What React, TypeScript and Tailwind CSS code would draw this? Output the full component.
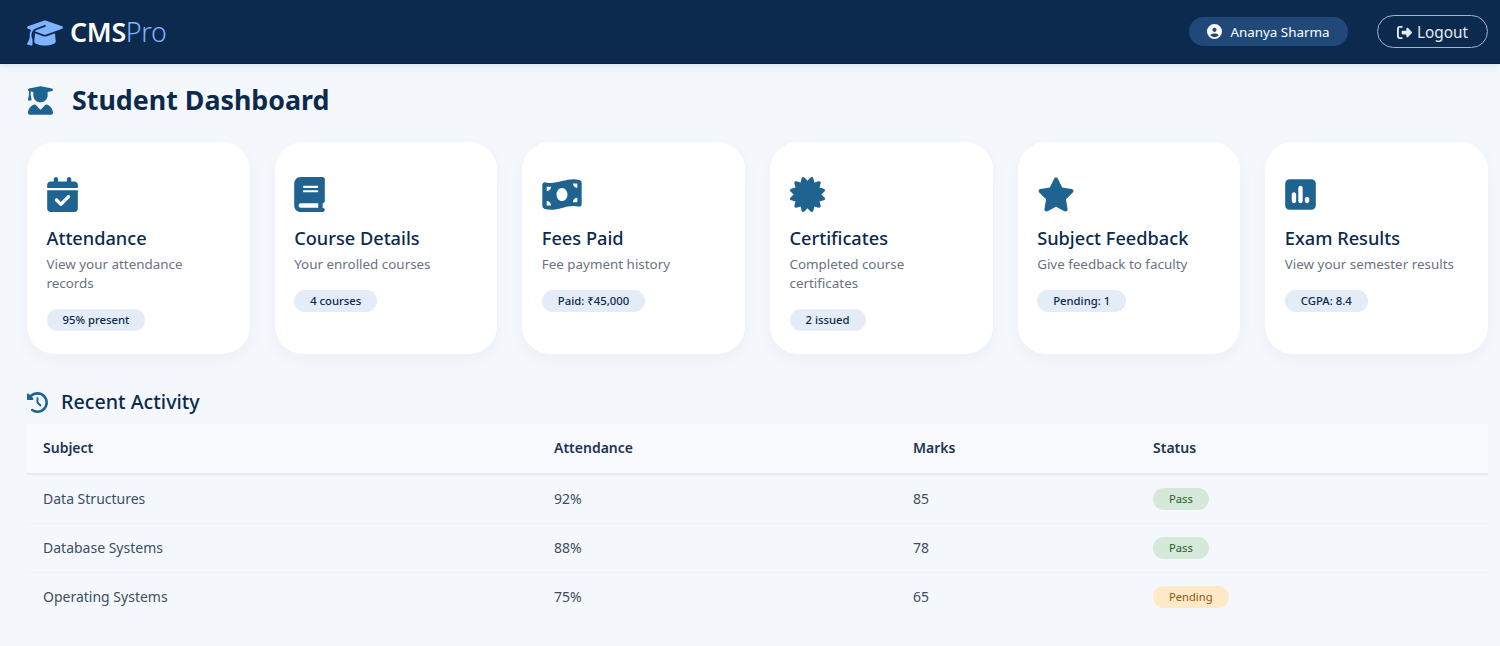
import type { IconType } from "react-icons"
import {
    FaBook,
    FaCalendarCheck,
    FaCertificate,
    FaCircleUser,
    FaClockRotateLeft,
    FaGraduationCap,
    FaMoneyBillWave,
    FaRightFromBracket,
    FaSquarePollVertical,
    FaStar,
    FaUserGraduate,
} from "react-icons/fa6"

interface ICard {
    icon: IconType,
    iconWidth: string,
    title: string,
    desc: string,
    badge: string,
}

const cards: ICard[] = [
    { icon: FaCalendarCheck, iconWidth: "w-[31px]", title: "Attendance", desc: "View your attendance records", badge: "95% present" },
    { icon: FaBook, iconWidth: "w-[31px]", title: "Course Details", desc: "Your enrolled courses", badge: "4 courses" },
    { icon: FaMoneyBillWave, iconWidth: "w-[40px]", title: "Fees Paid", desc: "Fee payment history", badge: "Paid: ₹45,000" },
    { icon: FaCertificate, iconWidth: "w-[35px]", title: "Certificates", desc: "Completed course certificates", badge: "2 issued" },
    { icon: FaStar, iconWidth: "w-[38px]", title: "Subject Feedback", desc: "Give feedback to faculty", badge: "Pending: 1" },
    { icon: FaSquarePollVertical, iconWidth: "w-[31px]", title: "Exam Results", desc: "View your semester results", badge: "CGPA: 8.4" },
]

const rows = [
    { subject: "Data Structures", attendance: "92%", marks: "85", status: "Pass" },
    { subject: "Database Systems", attendance: "88%", marks: "78", status: "Pass" },
    { subject: "Operating Systems", attendance: "75%", marks: "65", status: "Pending" },
]

function Header() {
    return (
        <header className="h-[64px] bg-[#0b2a4d] border-b border-[#0a2340] flex items-center justify-between pl-[27px] pr-[12px] shadow-[0_2px_6px_rgba(11,42,77,0.1)]">
            <div className="flex items-center gap-[7px] pt-[2px]">
                <FaGraduationCap className="text-[36px] text-[#7fb2ff]" />
                <span className="text-[26.8px] font-semibold text-white tracking-[-0.3px]">
                    CMS<span className="font-light text-[#7fb2ff]">Pro</span>
                </span>
            </div>

            <div className="flex items-center gap-[29px]">
                <div className="h-[29px] w-[159px] rounded-full bg-[#20497a] flex items-center justify-center gap-[8px] text-white text-[13.4px]">
                    <FaCircleUser className="text-[15px]" />
                    <span className="pt-[1px]">Ananya Sharma</span>
                </div>
                <button className="h-[33px] w-[111px] rounded-full border border-[#a3b5ca] flex items-center justify-center gap-[5px] text-[#e6ecf4] text-[15.4px]">
                    <FaRightFromBracket className="text-[15px] mt-[1px]" />
                    <span className="pt-[2px]">Logout</span>
                </button>
            </div>
        </header>
    )
}

function DashCard({ card }: { card: ICard }) {
    const Icon = card.icon

    return (
        <div className="h-[212px] rounded-[28px] bg-white px-[19.5px] pt-[35px] shadow-[0_6px_16px_rgba(11,42,77,0.04)]">
            <Icon className={`h-[35px] ${card.iconWidth} text-[#1f6391]`} />
            <h3 className="mt-[13px] text-[18.2px] leading-[26px] font-medium text-[#0b2a4d]">{card.title}</h3>
            <p className="mt-[4px] text-[13.4px] leading-[19px] text-[#6b7280]">{card.desc}</p>
            <span className="inline-block mt-[16px] h-[22px] leading-[22px] px-4 rounded-full bg-[#e3ecf7] text-[11.3px] font-medium text-[#0b2a4d]">
                {card.badge}
            </span>
        </div>
    )
}

function StatusPill({ status }: { status: string }) {
    const isPass = status === "Pass"
    return (
        <span className={`inline-block h-[22px] leading-[22px] px-4 rounded-full text-[11.2px] ${isPass ? "bg-[#d5e8d9] text-[#256029]" : "bg-[#ffe9c6] text-[#8a5a0b]"}`}>
            {status}
        </span>
    )
}

export default function App() {
    return (
        <div className="min-h-[646px] bg-[#f4f8fd] font-['Noto_Sans',sans-serif]">
            <Header />

            <main className="pl-[27px] pr-[12px]">
                <div className="h-[78px] flex items-center pb-[6px]">
                    <FaUserGraduate className="ml-[1px] h-[29px] w-[25px] text-[#1f6391]" />
                    <h1 className="ml-[19px] text-[26.8px] font-bold text-[#0b2a4d]">Student Dashboard</h1>
                </div>

                {/* cards */}
                <div className="grid grid-cols-6 gap-[25px]">
                    {cards.map((card) => (
                        <DashCard key={card.title} card={card} />
                    ))}
                </div>

                {/* recent activity */}
                <div className="mt-[30px] h-[36px] flex items-center gap-[13px]">
                    <FaClockRotateLeft className="text-[21px] text-[#1f6391]" />
                    <h2 className="text-[19.7px] font-medium text-[#0b2a4d]">Recent Activity</h2>
                </div>

                <table className="w-full mt-[4px] table-fixed text-left text-[14px]">
                    <thead className="bg-[#f8fafe]">
                        <tr className="h-[50px] border-b-2 border-[#e3eaf2]">
                            <th className="w-[511px] pl-4 pb-[2px] font-semibold text-[#1e3450]">Subject</th>
                            <th className="w-[359px] pl-4 pb-[2px] font-semibold text-[#1e3450]">Attendance</th>
                            <th className="w-[240px] pl-4 pb-[2px] font-semibold text-[#1e3450]">Marks</th>
                            <th className="pl-4 pb-[2px] font-semibold text-[#1e3450]">Status</th>
                        </tr>
                    </thead>
                    <tbody>
                        {rows.map((row) => (
                            <tr key={row.subject} className="h-[49px] border-b border-[#eff3f9] last:border-b-0 text-[#3f4d5f]">
                                <td className="pl-4">{row.subject}</td>
                                <td className="pl-4">{row.attendance}</td>
                                <td className="pl-4">{row.marks}</td>
                                <td className="pl-4"><StatusPill status={row.status} /></td>
                            </tr>
                        ))}
                    </tbody>
                </table>
            </main>
        </div>
    )
}
